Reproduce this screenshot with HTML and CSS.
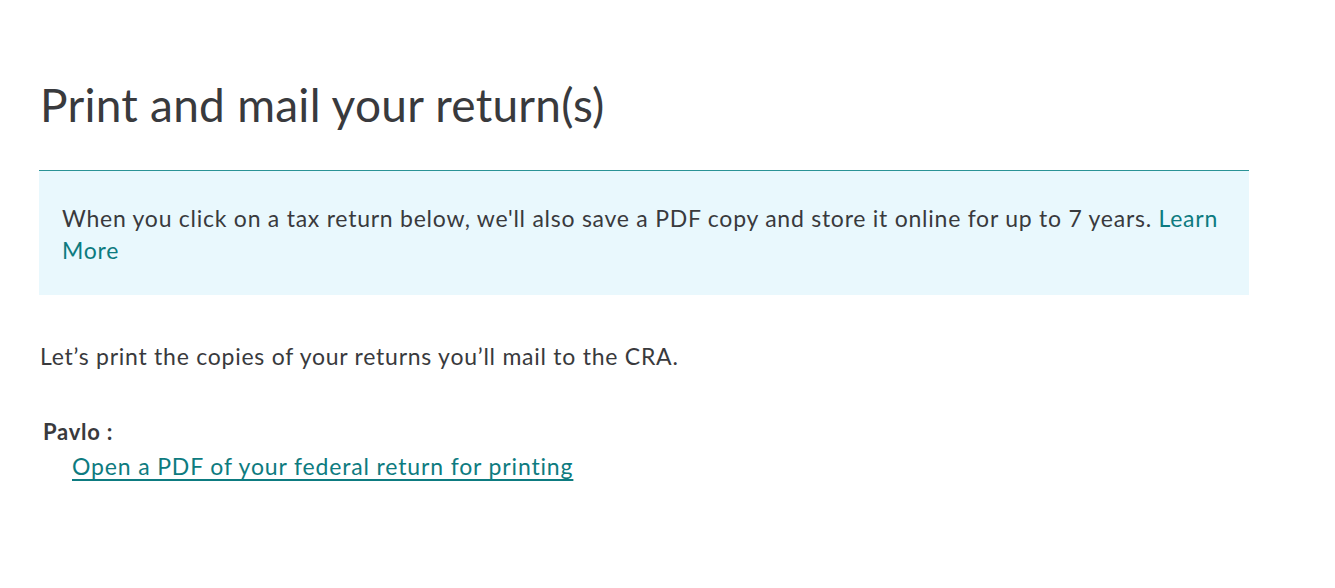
FILE: index.html
```html
<!DOCTYPE html>
<html lang="en">
<head>
<meta charset="utf-8">
<title>Print and mail your return(s)</title>
<link rel="stylesheet" href="styles.css">
</head>
<body>
<main class="page">
  <h1 class="title">Print and mail your return(s)</h1>
  <div class="notice">
    <p>When you click on a tax return below, we'll also save a PDF copy and store it online for up to 7 years. <a class="learn" href="#">Learn More</a></p>
  </div>
  <p class="intro">Let’s print the copies of your returns you’ll mail to the CRA.</p>
  <div class="person">
    <div class="name">Pavlo :</div>
    <a class="pdf-link" href="#">Open a PDF of your federal return for printing</a>
  </div>
</main>
</body>
</html>
```

FILE: styles.css
```css
html, body {
  margin: 0;
  padding: 0;
  background: #ffffff;
}
body {
  font-family: "Lato", "Noto Sans", sans-serif;
  color: #393a3d;
}
.page {
  width: 1210px;
  padding: 77px 0 0 39px;
}
.title {
  margin: 0;
  font-size: 46px;
  font-weight: 400;
  line-height: 56px;
  letter-spacing: 0.25px;
  color: #393a3d;
  padding-left: 1px;
}
.notice {
  margin-top: 37px;
  border-top: 1px solid #2a9396;
  background: #e9f8fd;
  padding: 31px 23px 29px 23px;
}
.notice p {
  margin: 0;
  font-size: 23px;
  line-height: 32px;
  letter-spacing: 0.75px;
}
.learn {
  color: #0d7b80;
  text-decoration: none;
}
.intro {
  margin: 45px 0 0 1px;
  font-size: 23px;
  line-height: 32px;
  letter-spacing: 0.75px;
}
.person {
  margin-top: 44px;
  padding-left: 4px;
}
.name {
  font-weight: 700;
  font-size: 22px;
  line-height: 32px;
  letter-spacing: 0.75px;
}
.pdf-link {
  display: inline-block;
  margin-top: 2px;
  margin-left: 29px;
  font-size: 23px;
  line-height: 32px;
  letter-spacing: 0.85px;
  color: #0d7b80;
  text-decoration: underline;
  text-decoration-thickness: 1.5px;
  text-underline-offset: 4px;
}
```
